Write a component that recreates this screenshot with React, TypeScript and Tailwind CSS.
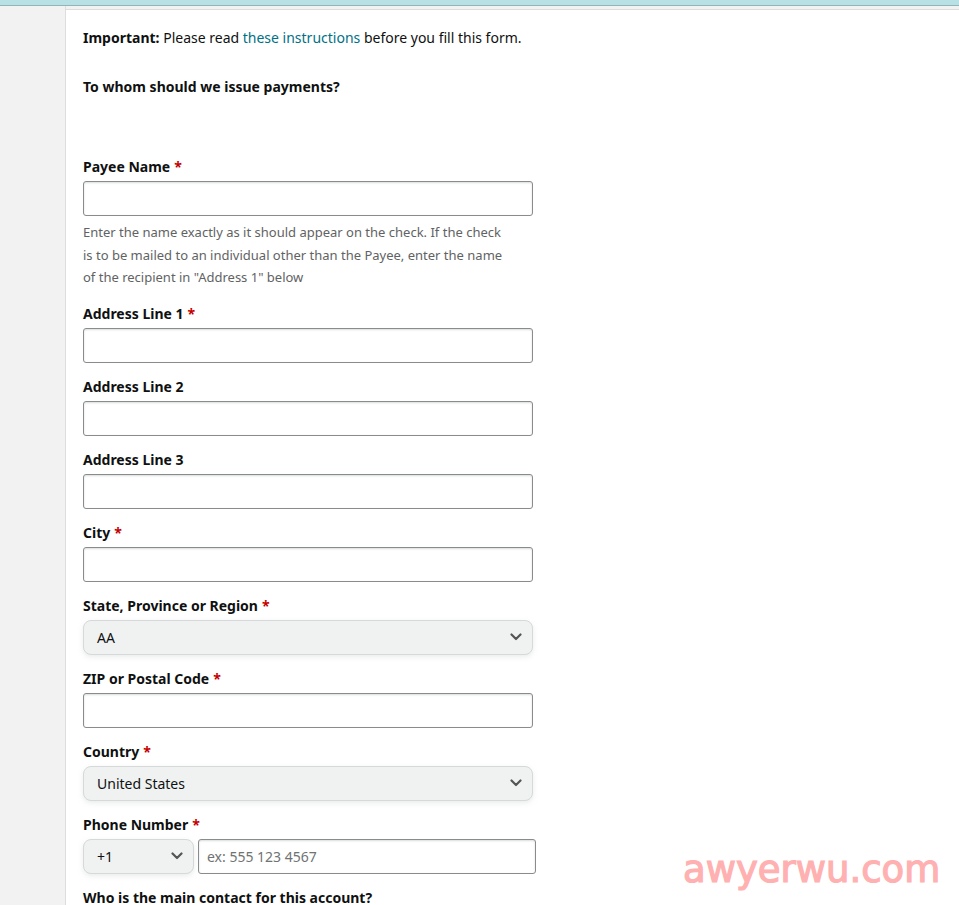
import React from "react";

const Req = () => <span className="text-[#c40000] ml-1">*</span>;

const Chevron = () => (
  <svg width="12" height="8" viewBox="0 0 12 8" className="shrink-0">
    <path d="M1.5 1.5 L6 6 L10.5 1.5" fill="none" stroke="#555" strokeWidth="2.2" strokeLinecap="round" strokeLinejoin="round" />
  </svg>
);

const Label = ({ text, req }: { text: string; req?: boolean }) => (
  <div className="h-5 leading-5 font-bold text-[14px] text-[#0f1111] mb-1">
    {text}
    {req && <Req />}
  </div>
);

const TextInput = ({ w = "w-[450px]" }: { w?: string }) => (
  <div className={`${w} h-[35px] border border-[#888c8c] rounded-[3px] bg-white shadow-[inset_0_1px_2px_rgba(15,17,17,0.15)]`} />
);

const Select = ({ value, w = "w-[450px]" }: { value: string; w?: string }) => (
  <div className={`${w} h-[35px] border border-[#d5d9d9] rounded-[8px] bg-[#f0f2f2] shadow-[0_2px_5px_rgba(213,217,217,0.5)] flex items-center justify-between pl-[13px] pr-[10px]`}>
    <span className="text-[14px] text-[#0f1111]">{value}</span>
    <Chevron />
  </div>
);

const Field = ({ label, req, children, mb = "mb-[14px]" }: { label: string; req?: boolean; children: React.ReactNode; mb?: string }) => (
  <div className={mb}>
    <Label text={label} req={req} />
    {children}
  </div>
);

export default function App() {
  return (
    <div
      className="w-[959px] h-[905px] overflow-hidden relative bg-[#f2f2f2] flex flex-col"
      style={{ fontFamily: '"Noto Sans", Arial, sans-serif' }}
    >
      <div className="h-[5px] bg-[#b7e1e5] shrink-0" />
      <div className="h-px bg-[#94b4b8] shrink-0" />
      <div className="flex flex-1">
        <div className="w-[66px] shrink-0 bg-[#f2f2f2] border-r border-[#dddddd]" />
        <div className="flex-1 mt-[3px] bg-white border-t border-[#dddddd] pl-[17px] pt-[18px] text-[14px] text-[#0f1111]">
          <div className="h-5 leading-5">
            <span className="font-bold">Important:</span> Please read{" "}
            <span className="text-[#007185]">these instructions</span> before you fill this form.
          </div>
          <div className="h-5 leading-5 font-bold mt-[29px]">To whom should we issue payments?</div>

          <div className="mt-[60px]">
            <Label text="Payee Name" req />
            <TextInput />
            <div className="w-[460px] whitespace-nowrap mt-[5px] mb-[15px] text-[13px] leading-[22.5px] text-[#5f6363]">
              Enter the name exactly as it should appear on the check. If the check
              <br />
              is to be mailed to an individual other than the Payee, enter the name
              <br />
              of the recipient in "Address 1" below
            </div>
          </div>

          <Field label="Address Line 1" req>
            <TextInput />
          </Field>
          <Field label="Address Line 2">
            <TextInput />
          </Field>
          <Field label="Address Line 3">
            <TextInput />
          </Field>
          <Field label="City" req>
            <TextInput />
          </Field>
          <Field label="State, Province or Region" req>
            <Select value="AA" />
          </Field>
          <Field label="ZIP or Postal Code" req>
            <TextInput />
          </Field>
          <Field label="Country" req>
            <Select value="United States" />
          </Field>
          <Field label="Phone Number" req>
            <div className="flex gap-[4px]">
              <Select value="+1" w="w-[111px]" />
              <div className="w-[338px] h-[35px] border border-[#888c8c] rounded-[3px] bg-white shadow-[inset_0_1px_2px_rgba(15,17,17,0.15)] flex items-center pl-[8px] text-[14px] text-[#6f7373]">
                ex: 555 123 4567
              </div>
            </div>
          </Field>
          <div className="h-5 leading-5 font-bold">Who is the main contact for this account?</div>
        </div>
      </div>
      <div
        className="absolute left-[683px] top-[850px] text-[37px] leading-[40px] text-[#ffb0b0] [-webkit-text-stroke:1.2px_#ffb0b0]"
        style={{ fontFamily: '"DejaVu Sans", sans-serif' }}
      >
        awyerwu.com
      </div>
    </div>
  );
}
